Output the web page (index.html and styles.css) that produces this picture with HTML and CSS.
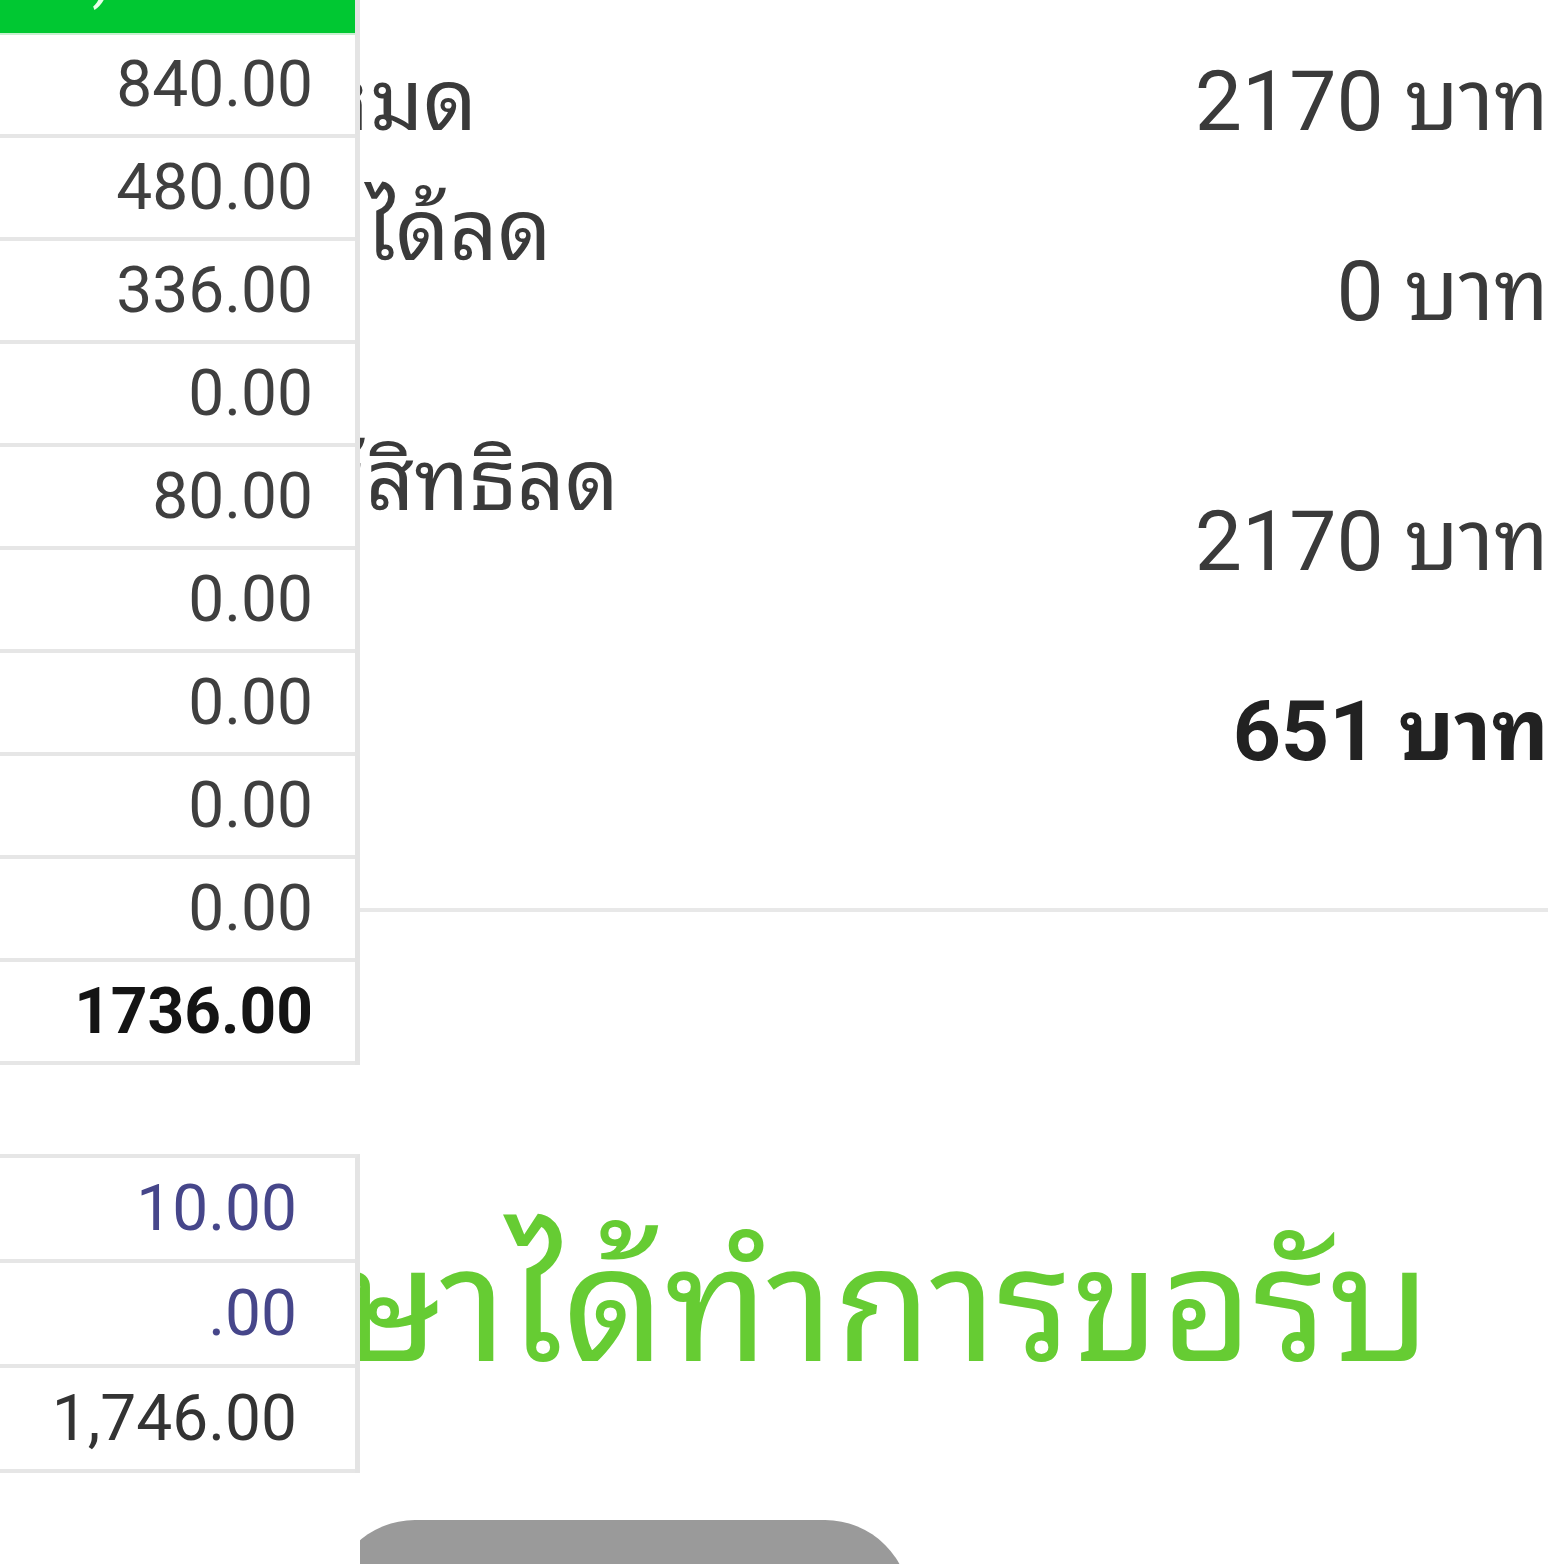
FILE: index.html
```html
<!DOCTYPE html>
<html lang="th">
<head>
<meta charset="utf-8">
<title>สรุปยอด</title>
<link rel="stylesheet" href="styles.css">
</head>
<body>
<div class="screen">
  <main class="content">
    <section class="summary">
      <div class="row single">
        <div class="lbl lbl-first"><span class="pre">ยอดรวมทั้งห</span><span>มด</span></div>
        <div class="val">2170 บาท</div>
      </div>
      <div class="row double">
        <div class="lbl"><span class="pre">ส่วนลดที่</span><span>ได้ลด</span></div>
        <div class="val">0 บาท</div>
      </div>
      <div class="row double">
        <div class="lbl"><span class="pre">ยอดที่ใช้</span><span>สิทธิลด</span></div>
        <div class="val">2170 บาท</div>
      </div>
      <div class="row single">
        <div class="lbl lbl-hidden"><span class="pre">ยอดที่ได้รับ</span></div>
        <div class="val strong">651 บาท</div>
      </div>
    </section>
    <hr class="divider">
    <p class="notice"><span class="pre">นักศึกษ</span><span>าได้ทำการขอรับ</span></p>
    <div class="actions">
      <button class="btn" type="button">ยืนยัน</button>
    </div>
  </main>

  <aside class="tables">
    <div class="grid main-grid">
      <div class="head"><span class="head-text">(บาท)</span></div>
      <div class="cell">840.00</div>
      <div class="cell">480.00</div>
      <div class="cell">336.00</div>
      <div class="cell">0.00</div>
      <div class="cell">80.00</div>
      <div class="cell">0.00</div>
      <div class="cell">0.00</div>
      <div class="cell">0.00</div>
      <div class="cell">0.00</div>
      <div class="cell total">1736.00</div>
    </div>
    <div class="grid sub-grid">
      <div class="cell blue">10.00</div>
      <div class="cell blue">.00</div>
      <div class="cell">1,746.00</div>
    </div>
  </aside>
</div>
</body>
</html>
```

FILE: styles.css
```css
html, body {
  margin: 0;
  padding: 0;
  background: #ffffff;
}

body {
  font-family: Roboto, "Noto Sans Thai Looped", "Noto Looped Thai", "Garuda", "Loma", "Waree", "Noto Sans Thai", "Noto Sans", "DejaVu Sans", sans-serif;
  color: #333333;
}

.screen {
  width: 1564px;
  height: 1564px;
  overflow: hidden;
  display: grid;
  grid-template-columns: 1fr;
  grid-template-rows: 1fr;
}

.content,
.tables {
  grid-area: 1 / 1;
}

/* ---------- right content ---------- */
.content {
  display: flex;
  flex-direction: column;
  padding-left: 360px;
}

.summary {
  display: flex;
  flex-direction: column;
  gap: 10px;
  padding: 42px 15px 0 6px;
}

.row {
  display: flex;
  justify-content: space-between;
  align-items: center;
  font-size: 84px;
  line-height: 120px;
  color: #3a3a3a;
}

.row.single { height: 120px; }
.row.double { height: 240px; }

.lbl {
  align-self: flex-start;
  display: flex;
  white-space: nowrap;
}

.lbl-first {
  margin-left: 4px;
}

.lbl-hidden {
  margin-left: -40px;
}

.pre {
  display: inline-flex;
  width: 0;
  justify-content: flex-end;
  white-space: nowrap;
}

.val {
  white-space: nowrap;
}

.val.strong {
  font-weight: 700;
  color: #222222;
}

.divider {
  border: 0;
  height: 4px;
  background: #e8e8e8;
  margin: 116px 16px 0 -20px;
}

.notice {
  margin: 305px 0 0 0;
  padding-left: 80px;
  display: flex;
  white-space: nowrap;
  font-size: 159px;
  line-height: 180px;
  color: #66cc33;
}

.actions {
  display: flex;
  margin-left: -30px;
  margin-top: 123px;
}

.btn {
  width: 580px;
  height: 170px;
  border: 0;
  border-radius: 90px;
  background: #9a9a9a;
  color: #ffffff;
  font-family: inherit;
  font-size: 70px;
  padding: 0 0 0 60px;
}

/* ---------- left tables ---------- */
.tables {
  justify-self: start;
  align-self: stretch;
  width: 360px;
  position: relative;
  z-index: 1;
  background: #ffffff;
  display: flex;
  flex-direction: column;
}

.grid {
  display: flex;
  flex-direction: column;
  border-right: 5px solid #e4e4e4;
  background: #ffffff;
}

.head {
  height: 33px;
  background: #00c832;
  border-bottom: 2px solid #c8f0d0;
  display: flex;
  align-items: flex-end;
  overflow: hidden;
}

.head-text {
  color: #e8ffe8;
  font-size: 64px;
  line-height: 64px;
  margin-bottom: 27px;
  margin-left: -40px;
}

.cell {
  height: 99px;
  border-bottom: 4px solid #e6e6e6;
  display: flex;
  align-items: center;
  justify-content: flex-end;
  padding-right: 42px;
  font-size: 64px;
  color: #3f3f3f;
}

.cell.total {
  font-weight: 700;
  color: #141414;
}

.sub-grid {
  margin-top: 89px;
  border-top: 4px solid #e6e6e6;
}

.sub-grid .cell {
  height: 101px;
  padding-right: 58px;
  color: #333333;
}

.sub-grid .cell.blue {
  color: #46468a;
}
```
